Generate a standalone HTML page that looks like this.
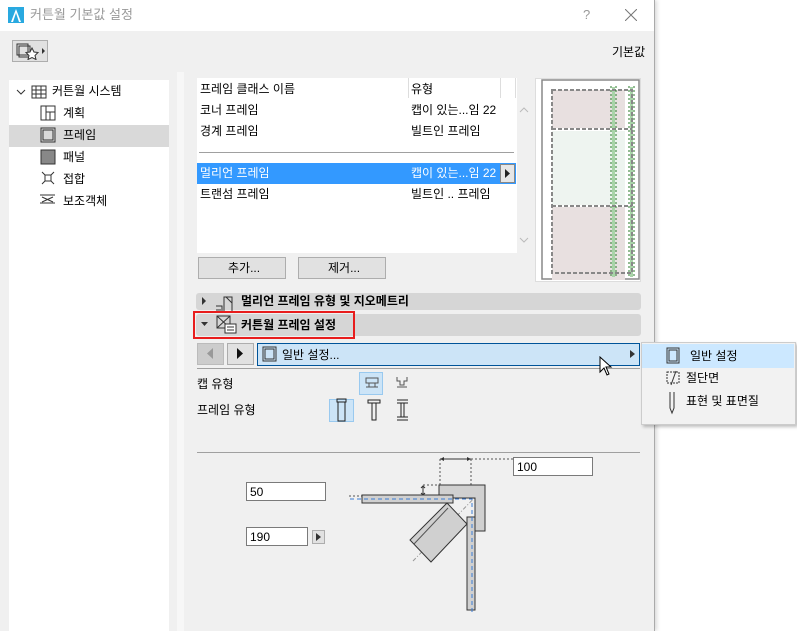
<!DOCTYPE html>
<html><head><meta charset="utf-8"><style>
*{margin:0;padding:0;box-sizing:border-box}
body{width:797px;height:631px;background:#fff;position:relative;overflow:hidden;font-family:"Liberation Sans","Noto Sans CJK KR",sans-serif;font-size:12px;color:#000}
.a{position:absolute}
.t{position:absolute;white-space:nowrap;line-height:14px}
</style></head><body>
<div class="a" style="left:0;top:0;width:655px;height:631px;background:#f0f0f0;border-right:1px solid #aaa;box-shadow:2px 0 4px rgba(0,0,0,.15)"></div>
<div class="a" style="left:0;top:0;width:654px;height:31px;background:#fff"></div>
<svg class="a" style="left:8px;top:7px" width="16" height="16"><rect width="16" height="16" fill="#29a9e0"/><path d="M3 15 L8 2 L13 15 Z" fill="#fff"/><path d="M5 15 L8 6 L11 15Z" fill="#29a9e0"/></svg>
<div class="t" style="left:30px;top:8px;color:#999;font-size:13px">커튼월 기본값 설정</div>
<div class="t" style="left:583px;top:8px;color:#999;font-size:13px">?</div>
<svg class="a" style="left:625px;top:9px" width="12" height="12"><path d="M0 0L12 12M12 0L0 12" stroke="#777" stroke-width="1"/></svg>
<div class="a" style="left:12px;top:40px;width:36px;height:22px;background:#e1e1e1;border:1px solid #adadad"></div>
<svg class="a" style="left:15px;top:42px" width="32" height="18"><rect x="2" y="2" width="11" height="11" fill="none" stroke="#333"/><rect x="4" y="4" width="11" height="11" fill="none" stroke="#333"/><path d="M17 6l2 4 4 .5-3 3 1 4-4-2-4 2 1-4-3-3 4-.5z" fill="#fff" stroke="#333"/><path d="M27 6l3 3-3 3z" fill="#333"/></svg>
<div class="t" style="left:612px;top:45px">기본값</div>
<!-- left tree -->
<div class="a" style="left:9px;top:80px;width:160px;height:551px;background:#fff"></div>
<div class="a" style="left:9px;top:125px;width:160px;height:22px;background:#d9d9d9"></div>
<svg class="a" style="left:15px;top:84px" width="160" height="130" fill="none" stroke="#333">
<path d="M2 6l4 4 4-4"/>
<rect x="17" y="2" width="14" height="12"/><path d="M21 2v12M26 2v12M17 6h14M17 10h14"/>
<rect x="26" y="22" width="14" height="14"/><path d="M31 22v14M31 28h9M35 28v8"/>
<rect x="26" y="44" width="14" height="14"/><rect x="28" y="46" width="10" height="10"/>
<rect x="26" y="66" width="14" height="14" fill="#888"/>
<path d="M27 88l12 12M39 88l-12 12"/><rect x="30" y="91" width="6" height="6" fill="#fff"/>
<path d="M25 111h15M25 119h15M27 113l11 5M27 118l11-5"/>
</svg>
<div class="t" style="left:52px;top:84px">커튼월 시스템</div>
<div class="t" style="left:63px;top:106px">계획</div>
<div class="t" style="left:63px;top:128px">프레임</div>
<div class="t" style="left:63px;top:150px">패널</div>
<div class="t" style="left:63px;top:172px">접합</div>
<div class="t" style="left:63px;top:194px">보조객체</div>
<div class="a" style="left:177px;top:72px;width:7px;height:559px;background:#f7f7f7"></div>
<!-- list -->
<div class="a" style="left:197px;top:78px;width:320px;height:175px;background:#fff"></div>
<div class="a" style="left:408px;top:78px;width:1px;height:20px;background:#ddd"></div>
<div class="a" style="left:500px;top:78px;width:1px;height:20px;background:#ddd"></div>
<div class="a" style="left:515px;top:78px;width:1px;height:20px;background:#ddd"></div>
<div class="t" style="left:200px;top:82px">프레임 클래스 이름</div>
<div class="t" style="left:411px;top:82px">유형</div>
<div class="t" style="left:200px;top:103px">코너 프레임</div><div class="t" style="left:411px;top:103px">캡이 있는...임 22</div>
<div class="t" style="left:200px;top:124px">경계 프레임</div><div class="t" style="left:411px;top:124px">빌트인 프레임</div>
<div class="a" style="left:199px;top:152px;width:315px;height:1px;background:#a0a0a0"></div>
<div class="a" style="left:197px;top:163px;width:319px;height:21px;background:#3399ff"></div>
<div class="t" style="left:200px;top:166px;color:#fff">멀리언 프레임</div><div class="t" style="left:411px;top:166px;color:#fff">캡이 있는...임 22</div>
<div class="a" style="left:500px;top:164px;width:15px;height:19px;background:#e6e6e6;border:1px solid #888"></div>
<svg class="a" style="left:505px;top:169px" width="6" height="9"><path d="M0 0l5 4.5L0 9z" fill="#222"/></svg>
<div class="t" style="left:200px;top:187px">트랜섬 프레임</div><div class="t" style="left:411px;top:187px">빌트인 .. 프레임</div>
<svg class="a" style="left:519px;top:106px" width="10" height="140" fill="none" stroke="#bbb"><path d="M1 6l4-4 4 4M1 132l4 4 4-4"/></svg>
<!-- preview -->
<div class="a" style="left:535px;top:78px;width:106px;height:204px;background:#fff;border:1px solid #ddd"></div>
<svg class="a" style="left:541px;top:79px" width="100" height="201">
<rect x="1" y="1" width="97" height="199" fill="none" stroke="#888" stroke-width="1.5"/>
<rect x="11" y="11" width="73" height="38" fill="#e8e0e0"/><rect x="11" y="128" width="73" height="85" fill="#e8e0e0"/>
<rect x="11" y="52" width="73" height="74" fill="#eef4f0"/>
<rect x="71" y="8" width="3" height="190" fill="#a8d4a8"/><rect x="89" y="8" width="3" height="190" fill="#a8d4a8"/>
<path d="M11 11h80v183H11zM11 50h80M11 127h80" fill="none" stroke="#888" stroke-width="2" stroke-dasharray="4 2"/>
<path d="M70 7v190M75 7v190M88 7v190M93 7v190" stroke="#2a7a2a" stroke-dasharray="2 2"/>
</svg>
<!-- buttons -->
<div class="a" style="left:198px;top:257px;width:88px;height:22px;background:#e1e1e1;border:1px solid #adadad"></div>
<div class="t" style="left:228px;top:261px">추가...</div>
<div class="a" style="left:298px;top:257px;width:88px;height:22px;background:#e1e1e1;border:1px solid #adadad"></div>
<div class="t" style="left:328px;top:261px">제거...</div>
<!-- panels -->
<div class="a" style="left:196px;top:293px;width:445px;height:17px;background:#d6d6d6;border-radius:3px"></div>
<svg class="a" style="left:202px;top:296px" width="40" height="18"><path d="M0 1l4 4-4 4z" fill="#333"/><path d="M14 10h6v6M14 14h5M22 1h8v15h-8zM24 1l6 6" fill="none" stroke="#333"/></svg>
<div class="t" style="left:241px;top:294px;font-weight:bold">멀리언 프레임 유형 및 지오메트리</div>
<div class="a" style="left:196px;top:314px;width:445px;height:22px;background:#d6d6d6;border-radius:3px"></div>
<div class="a" style="left:193px;top:311px;width:162px;height:28px;border:2px solid #e81d1d"></div>
<svg class="a" style="left:201px;top:315px" width="40" height="20"><path d="M0 7h7l-3.5 4z" fill="#333"/><rect x="16" y="1" width="13" height="12" fill="none" stroke="#333"/><path d="M16 1l13 12M29 1l-13 12" stroke="#333"/><rect x="24" y="9" width="11" height="9" fill="#fff" stroke="#333"/><path d="M26 12h7M26 15h7" stroke="#333"/></svg>
<div class="t" style="left:241px;top:318px;font-weight:bold">커튼월 프레임 설정</div>
<!-- nav -->
<div class="a" style="left:197px;top:343px;width:27px;height:22px;background:#ccc;border:1px solid #bbb"></div>
<svg class="a" style="left:207px;top:348px" width="6" height="11"><path d="M6 0L0 5.5 6 11z" fill="#999"/></svg>
<div class="a" style="left:227px;top:343px;width:27px;height:22px;background:#e1e1e1;border:1px solid #adadad"></div>
<svg class="a" style="left:237px;top:348px" width="6" height="11"><path d="M0 0l6 5.5L0 11z" fill="#111"/></svg>
<div class="a" style="left:257px;top:343px;width:383px;height:23px;background:#cce4f7;border:1px solid #005499"></div>
<svg class="a" style="left:262px;top:346px" width="16" height="16" fill="none" stroke="#333"><rect x="1" y="1" width="13" height="14"/><rect x="3" y="3" width="9" height="10"/></svg>
<div class="t" style="left:282px;top:348px">일반 설정...</div>
<svg class="a" style="left:630px;top:350px" width="5" height="8"><path d="M0 0l5 4-5 4z" fill="#333"/></svg>
<div class="a" style="left:197px;top:368px;width:443px;height:1px;background:#a0a0a0"></div>
<svg class="a" style="left:599px;top:356px" width="14" height="21"><path d="M1 1v15l4-4 3 7 2-1-3-7h5z" fill="#fff" stroke="#000"/></svg>
<!-- cap/frame types -->
<div class="t" style="left:197px;top:377px">캡 유형</div>
<div class="t" style="left:197px;top:403px">프레임 유형</div>
<div class="a" style="left:359px;top:372px;width:24px;height:23px;background:#cce4f7;border:1px solid #99c9ef"></div>
<div class="a" style="left:329px;top:399px;width:25px;height:23px;background:#cce4f7;border:1px solid #99c9ef"></div>
<svg class="a" style="left:0;top:0" width="797" height="631" fill="none">
<g stroke="#555">
<path d="M366 378h12v5h-12zM369 383v4M375 383v4M366 387h12"/>
<path d="M397 377v4h3v4h4v-4h3v-4M397 387h10"/>
</g>
<g stroke="#222">
<path d="M337 399h9v3h-9zM338 402v19h7v-19z"/>
<path d="M368 400h12v3h-12zM372 403v17h4V403z"/>
<path d="M397 400h11M397 403h11M397 417h11M397 420h11M401 403v14M404 403v14"/>
</g>
<!-- diagram -->
<path d="M440 459v26M471 459v26M471 459h46M423 485h17M349 496h13" stroke="#555" stroke-dasharray="2 2"/>
<path d="M440 459h31" stroke="#333"/>
<path d="M440 459l4-2v4zM471 459l-4-2v4z" fill="#333"/>
<path d="M423 486v9M421 488l2-2 2 2M421 493l2 2 2-2" stroke="#333"/>
<path d="M413 561L485 487" stroke="#999" stroke-dasharray="4 2 1 2"/>
<path d="M439 485h46v46h-10v-33h-36z" fill="#d0d0d0" stroke="#333"/>
<path d="M362 495h91v8h-91z" fill="#d0d0d0" stroke="#333"/>
<path d="M467 517h8v93h-8z" fill="#d0d0d0" stroke="#333"/>
<path d="M447 503l20 21-36 38-21-22z" fill="#d0d0d0" stroke="#333"/>
<path d="M448 508L414 544" stroke="#555"/>
<path d="M350 499h122v115" stroke="#3a7bd5" stroke-dasharray="4 3"/>
</svg>
<!-- popup menu -->
<div class="a" style="left:641px;top:342px;width:155px;height:83px;background:#f2f2f2;border:1px solid #ccc;box-shadow:2px 2px 3px rgba(0,0,0,.25)"></div>
<div class="a" style="left:642px;top:344px;width:152px;height:24px;background:#cce8ff"></div>
<svg class="a" style="left:666px;top:347px" width="16" height="70" fill="none" stroke="#333"><rect x="1" y="1" width="12" height="15"/><rect x="3" y="3" width="8" height="11"/><rect x="1" y="25" width="12" height="11" stroke-dasharray="2 1"/><path d="M5 38L10 24"/><path d="M4 45v16l2 5 2-5V45"/></svg>
<div class="t" style="left:690px;top:349px">일반 설정</div>
<div class="t" style="left:686px;top:371px">절단면</div>
<div class="t" style="left:686px;top:394px">표현 및 표면질</div>
<!-- bottom -->
<div class="a" style="left:197px;top:452px;width:443px;height:1px;background:#a0a0a0"></div>
<div class="a" style="left:513px;top:457px;width:80px;height:19px;background:#fff;border:1px solid #7a7a7a"></div>
<div class="t" style="left:517px;top:460px">100</div>
<div class="a" style="left:246px;top:482px;width:80px;height:19px;background:#fff;border:1px solid #7a7a7a"></div>
<div class="t" style="left:250px;top:485px">50</div>
<div class="a" style="left:246px;top:527px;width:62px;height:19px;background:#fff;border:1px solid #7a7a7a"></div>
<div class="t" style="left:250px;top:530px">190</div>
<div class="a" style="left:312px;top:530px;width:13px;height:14px;background:#e1e1e1;border:1px solid #adadad"></div>
<svg class="a" style="left:316px;top:533px" width="5" height="8"><path d="M0 0l5 4-5 4z" fill="#333"/></svg>
</body></html>
